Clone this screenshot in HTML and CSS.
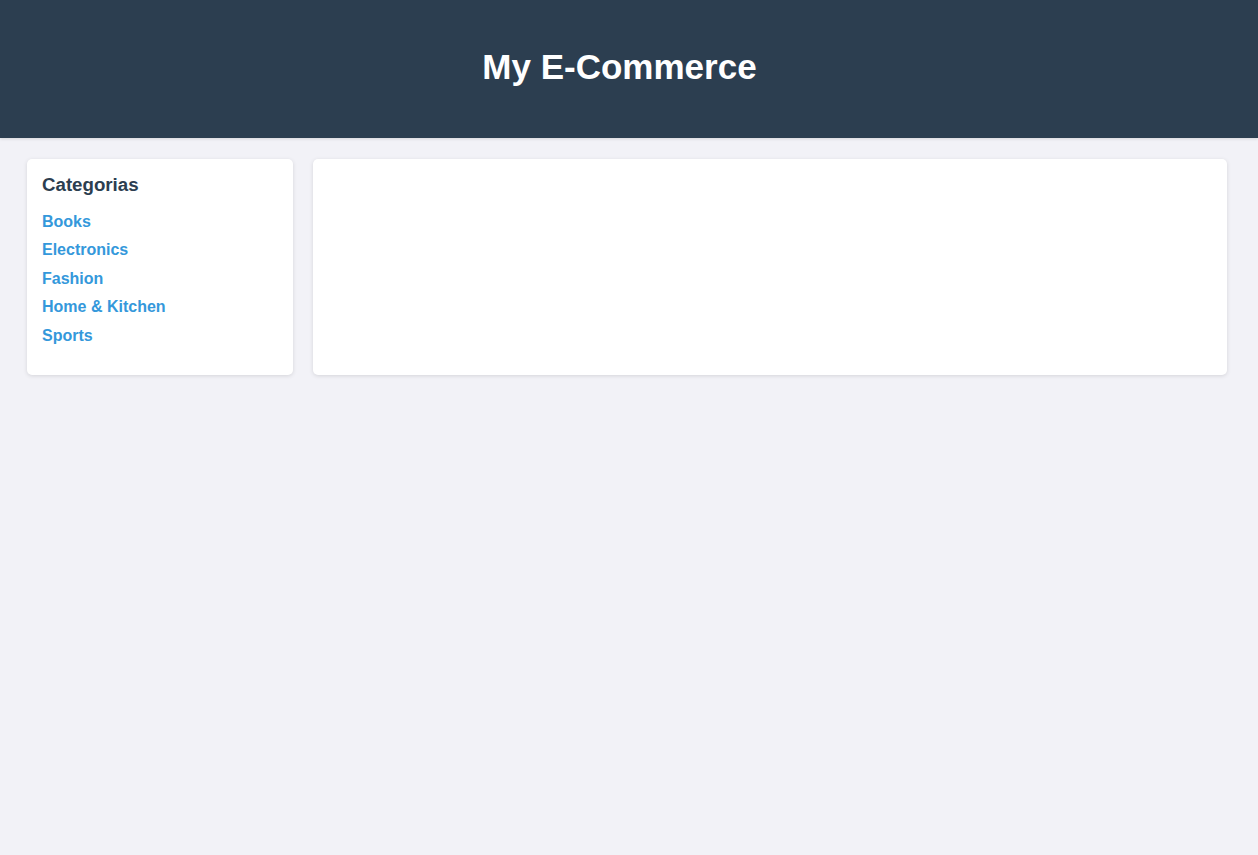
FILE: index.html
```html
<!DOCTYPE html>
<html lang="pt">
<head>
<meta charset="utf-8">
<title>My E-Commerce</title>
<link rel="stylesheet" href="styles.css">
</head>
<body>
<header class="site-header">
  <h1 class="site-title">My E-Commerce</h1>
</header>
<main class="layout">
  <aside class="card sidebar">
    <h3 class="sidebar-title">Categorias</h3>
    <ul class="category-list">
      <li><a href="#">Books</a></li>
      <li><a href="#">Electronics</a></li>
      <li><a href="#">Fashion</a></li>
      <li><a href="#">Home &amp; Kitchen</a></li>
      <li><a href="#">Sports</a></li>
    </ul>
  </aside>
  <section class="card content"></section>
</main>
</body>
</html>
```
FILE: styles.css
```css
html, body {
  margin: 0;
  padding: 0;
}
body {
  background: #f2f2f7;
  font-family: "Liberation Sans", Arial, sans-serif;
  color: #2c3e50;
  min-height: 855px;
}
.site-header {
  background: #2c3e50;
  height: 138px;
  display: flex;
  align-items: center;
  justify-content: center;
  padding-right: 19px;
  box-sizing: border-box;
  box-shadow: 0 1px 3px rgba(0,0,0,0.12);
}
.site-title {
  margin: 0 0 6px;
  color: #fff;
  font-size: 35px;
  font-weight: bold;
  line-height: 1;
}
.layout {
  display: grid;
  grid-template-columns: 266px 1fr;
  gap: 20px;
  padding: 21px 31px 20px 27px;
  align-items: stretch;
}
.card {
  background: #fff;
  border-radius: 5px;
  box-shadow: 0 1px 4px rgba(0,0,0,0.12);
}
.sidebar {
  padding: 15px;
}
.sidebar-title {
  margin: 0 0 12px;
  font-size: 18.7px;
  font-weight: bold;
  color: #2c3e50;
  line-height: 21.5px;
}
.category-list {
  list-style: none;
  margin: 0 0 10px;
  padding: 0;
}
.category-list li {
  padding: 5px 0;
  line-height: 18.5px;
}
.category-list a {
  color: #3498db;
  font-weight: bold;
  font-size: 16px;
  text-decoration: none;
}
```
